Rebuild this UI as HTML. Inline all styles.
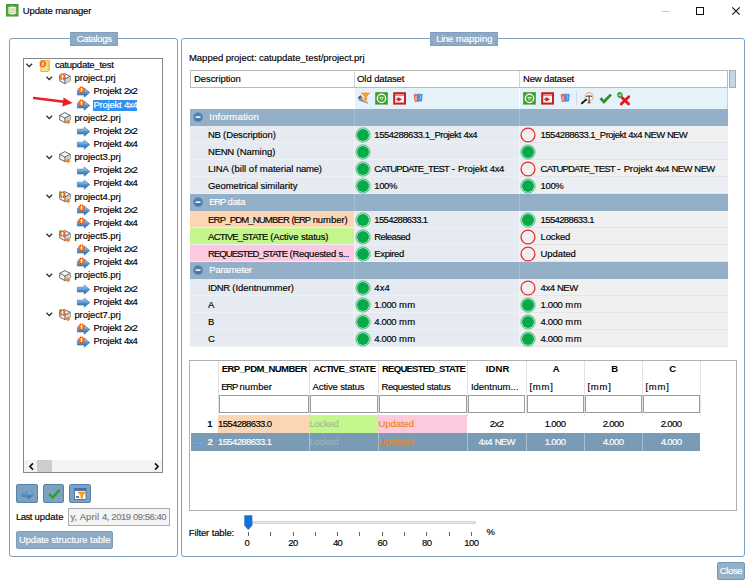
<!DOCTYPE html>
<html lang="en"><head><meta charset="utf-8"><title>Update manager</title>
<style>
html,body{margin:0;padding:0;}
body{width:750px;height:585px;background:#fff;overflow:hidden;position:relative;font-family:"Liberation Sans", sans-serif;font-size:9px;color:#000;}
div,span.t,svg{position:absolute;box-sizing:border-box;}
span.t{white-space:nowrap;-webkit-text-stroke:0.15px;}
svg{overflow:visible;}
</style></head>
<body>
<svg style="left:6px;top:4.4px" width="12.5" height="12.5" viewBox="0 0 12.5 12.5">
<rect x="0" y="0" width="12.5" height="12.5" fill="#3f902b"/>
<rect x="0.8" y="0.8" width="10.9" height="10.9" fill="#57a53f"/>
<path d="M2.4 3.2 Q6.2 1.6 10.1 3.2 V9.6 Q6.2 11.4 2.4 9.6 Z" fill="#f1f8ee"/>
<path d="M2.4 4.6 Q6.2 6 10.1 4.6 M2.4 6.4 Q6.2 7.8 10.1 6.4 M2.4 8.1 Q6.2 9.5 10.1 8.1" stroke="#a9d29c" stroke-width="0.8" fill="none"/>
<path d="M4.6 4.4 H7.8 M4.6 6.2 H7.8 M4.6 8 H7.8" stroke="#e8c890" stroke-width="0.5" fill="none"/>
</svg>
<span class="t" style="top:5.40px;line-height:12px;font-size:9.5px;word-spacing:-0.116px;left:22.80px;"><span style="letter-spacing:-0.139px">Update</span> <span style="letter-spacing:-0.218px">manager</span></span>
<div style="left:662px;top:11px;width:8px;height:1px;background:#c8c8c8;"></div>
<div style="left:696px;top:7px;width:8px;height:8px;border:1px solid #111;"></div>
<svg style="left:732px;top:7px" width="8" height="8" viewBox="0 0 8 8"><path d="M0.3 0.3 L7.7 7.7 M7.7 0.3 L0.3 7.7" stroke="#111" stroke-width="1.15" fill="none"/></svg>
<div style="left:9px;top:38px;width:169px;height:519px;border:1px solid #7ba0c2;border-radius:3px;"></div>
<div style="left:181px;top:38px;width:564px;height:519px;border:1px solid #7ba0c2;border-radius:3px;"></div>
<div style="left:70.3px;top:32px;width:47.6px;height:13.5px;background:#8eabc5;border:1px solid #7f9fbc;"></div>
<span class="t" style="top:32.80px;line-height:12px;font-size:9.5px;color:#fff;left:94.2px;transform:translateX(-50%);letter-spacing:-0.338px;">Catalogs</span>
<div style="left:430.3px;top:32px;width:68.2px;height:13.5px;background:#8eabc5;border:1px solid #7f9fbc;"></div>
<span class="t" style="top:32.80px;line-height:12px;font-size:9.5px;color:#fff;word-spacing:-0.068px;left:464.4px;transform:translateX(-50%);"><span style="letter-spacing:-0.263px">Line</span> <span style="letter-spacing:0.080px">mapping</span></span>
<div style="left:23px;top:58px;width:140px;height:415px;background:#fff;border:1px solid #828790;"></div>
<svg width="0" height="0" style="left:0;top:0"><defs><linearGradient id="ag" x1="0" y1="0" x2="0" y2="1"><stop offset="0.08" stop-color="#b6d9f5"/><stop offset="0.5" stop-color="#5597d3"/><stop offset="0.95" stop-color="#27609e"/></linearGradient></defs></svg>
<svg style="left:26px;top:62.599999999999994px" width="7" height="5" viewBox="0 0 7 5"><path d="M0.5 0.8 L3.3 3.7 L6.1 0.8" stroke="#262626" stroke-width="1.25" fill="none"/></svg>
<svg style="left:38.8px;top:59.599999999999994px" width="12" height="12" viewBox="0 0 12 12"><path d="M1.8 0.5 H10.3 V10.2 H9.2 V11.5 H1.8 Z" fill="#fde68e" stroke="#f2b134" stroke-width="1"/><path d="M9.2 2 V10.2" stroke="#f2b134" stroke-width="0.8"/><g transform="translate(3.9 4.1)"><polygon points="3.33,1.38 1.73,1.73 1.38,3.33 0.00,2.45 -1.38,3.33 -1.73,1.73 -3.33,1.38 -2.45,0.00 -3.33,-1.38 -1.73,-1.73 -1.38,-3.33 -0.00,-2.45 1.38,-3.33 1.73,-1.73 3.33,-1.38 2.45,-0.00" fill="#f1601a" stroke="#e2500f" stroke-width="0.4"/><circle r="1.87" fill="#fb9a3c"/><rect x="-0.55" y="-1.7" width="1.1" height="2.2" fill="#fff"/><rect x="-0.55" y="0.9" width="1.1" height="0.9" fill="#fff"/></g></svg>
<span class="t" style="top:59.10px;line-height:12px;font-size:9.5px;left:54.90px;letter-spacing:-0.252px;">catupdate_test</span>
<svg style="left:45.8px;top:75.74px" width="7" height="5" viewBox="0 0 7 5"><path d="M0.5 0.8 L3.3 3.7 L6.1 0.8" stroke="#262626" stroke-width="1.25" fill="none"/></svg>
<svg style="left:57.6px;top:71.53999999999999px" width="14" height="14" viewBox="0 0 14 14"><path d="M6.9 1.6 L12.2 4.3 L12.2 8.9 L6.9 11.6 L1.7 8.9 L1.7 4.3 Z" fill="#f7f7f7" stroke="#585858" stroke-width="0.9" stroke-linejoin="round"/><path d="M6.9 7 L12.2 4.3 V8.9 L6.9 11.6 Z" fill="#d4d4d4"/><path d="M1.7 4.3 L6.9 7 L12.2 4.3 M6.9 7 V11.6" stroke="#585858" stroke-width="0.9" fill="none"/><g transform="translate(4.4 4.6)"><polygon points="3.33,1.38 1.73,1.73 1.38,3.33 0.00,2.45 -1.38,3.33 -1.73,1.73 -3.33,1.38 -2.45,0.00 -3.33,-1.38 -1.73,-1.73 -1.38,-3.33 -0.00,-2.45 1.38,-3.33 1.73,-1.73 3.33,-1.38 2.45,-0.00" fill="#f1601a" stroke="#e2500f" stroke-width="0.4"/><circle r="1.87" fill="#fb9a3c"/><rect x="-0.55" y="-1.7" width="1.1" height="2.2" fill="#fff"/><rect x="-0.55" y="0.9" width="1.1" height="0.9" fill="#fff"/></g></svg>
<span class="t" style="top:72.24px;line-height:12px;font-size:9.5px;left:74.40px;letter-spacing:-0.038px;">project.prj</span>
<svg style="left:77px;top:86.89px" width="13" height="11" viewBox="0 0 13 11"><path d="M0.4 3.2 H7.2 V1 L12.8 5.6 L7.2 10.2 V8 H0.4 Z" fill="url(#ag)" stroke="#3a72ab" stroke-width="0.6" stroke-linejoin="round"/><g transform="translate(4.5 2.9)"><polygon points="3.33,1.38 1.73,1.73 1.38,3.33 0.00,2.45 -1.38,3.33 -1.73,1.73 -3.33,1.38 -2.45,0.00 -3.33,-1.38 -1.73,-1.73 -1.38,-3.33 -0.00,-2.45 1.38,-3.33 1.73,-1.73 3.33,-1.38 2.45,-0.00" fill="#f1601a" stroke="#e2500f" stroke-width="0.4"/><circle r="1.87" fill="#fb9a3c"/><rect x="-0.55" y="-1.7" width="1.1" height="2.2" fill="#fff"/><rect x="-0.55" y="0.9" width="1.1" height="0.9" fill="#fff"/></g></svg>
<span class="t" style="top:85.39px;line-height:12px;font-size:9.5px;word-spacing:-0.165px;left:93.50px;"><span style="letter-spacing:-0.228px">Projekt</span> <span style="letter-spacing:-0.695px">2x2</span></span>
<svg style="left:77px;top:100.03px" width="13" height="11" viewBox="0 0 13 11"><path d="M0.4 3.2 H7.2 V1 L12.8 5.6 L7.2 10.2 V8 H0.4 Z" fill="url(#ag)" stroke="#3a72ab" stroke-width="0.6" stroke-linejoin="round"/><g transform="translate(4.5 2.9)"><polygon points="3.33,1.38 1.73,1.73 1.38,3.33 0.00,2.45 -1.38,3.33 -1.73,1.73 -3.33,1.38 -2.45,0.00 -3.33,-1.38 -1.73,-1.73 -1.38,-3.33 -0.00,-2.45 1.38,-3.33 1.73,-1.73 3.33,-1.38 2.45,-0.00" fill="#f1601a" stroke="#e2500f" stroke-width="0.4"/><circle r="1.87" fill="#fb9a3c"/><rect x="-0.55" y="-1.7" width="1.1" height="2.2" fill="#fff"/><rect x="-0.55" y="0.9" width="1.1" height="0.9" fill="#fff"/></g></svg>
<div style="left:93.4px;top:99.53px;width:43.8px;height:11px;background:#3092f0;"></div>
<span class="t" style="top:98.53px;line-height:12px;font-size:9.5px;color:#fff;word-spacing:-0.165px;left:93.50px;"><span style="letter-spacing:-0.228px">Projekt</span> <span style="letter-spacing:-0.695px">4x4</span></span>
<svg style="left:45.8px;top:115.18px" width="7" height="5" viewBox="0 0 7 5"><path d="M0.5 0.8 L3.3 3.7 L6.1 0.8" stroke="#262626" stroke-width="1.25" fill="none"/></svg>
<svg style="left:57.6px;top:110.98px" width="14" height="14" viewBox="0 0 14 14"><path d="M6.9 1.6 L12.2 4.3 L12.2 8.9 L6.9 11.6 L1.7 8.9 L1.7 4.3 Z" fill="#f7f7f7" stroke="#585858" stroke-width="0.9" stroke-linejoin="round"/><path d="M6.9 7 L12.2 4.3 V8.9 L6.9 11.6 Z" fill="#d4d4d4"/><path d="M1.7 4.3 L6.9 7 L12.2 4.3 M6.9 7 V11.6" stroke="#585858" stroke-width="0.9" fill="none"/><path d="M7.6 10.3 H9.8 V8.8 L12.2 11 L9.8 13.2 V11.8 H7.6 Z" fill="#f58a1f" stroke="#e8700f" stroke-width="0.5"/></svg>
<span class="t" style="top:111.68px;line-height:12px;font-size:9.5px;left:74.40px;letter-spacing:-0.058px;">project2.prj</span>
<svg style="left:77px;top:126.32px" width="13" height="11" viewBox="0 0 13 11"><path d="M0.4 3.2 H7.2 V1 L12.8 5.6 L7.2 10.2 V8 H0.4 Z" fill="url(#ag)" stroke="#3a72ab" stroke-width="0.6" stroke-linejoin="round"/></svg>
<span class="t" style="top:124.82px;line-height:12px;font-size:9.5px;word-spacing:-0.165px;left:93.50px;"><span style="letter-spacing:-0.228px">Projekt</span> <span style="letter-spacing:-0.695px">2x2</span></span>
<svg style="left:77px;top:139.47px" width="13" height="11" viewBox="0 0 13 11"><path d="M0.4 3.2 H7.2 V1 L12.8 5.6 L7.2 10.2 V8 H0.4 Z" fill="url(#ag)" stroke="#3a72ab" stroke-width="0.6" stroke-linejoin="round"/></svg>
<span class="t" style="top:137.97px;line-height:12px;font-size:9.5px;word-spacing:-0.165px;left:93.50px;"><span style="letter-spacing:-0.228px">Projekt</span> <span style="letter-spacing:-0.695px">4x4</span></span>
<svg style="left:45.8px;top:154.62px" width="7" height="5" viewBox="0 0 7 5"><path d="M0.5 0.8 L3.3 3.7 L6.1 0.8" stroke="#262626" stroke-width="1.25" fill="none"/></svg>
<svg style="left:57.6px;top:150.42000000000002px" width="14" height="14" viewBox="0 0 14 14"><path d="M6.9 1.6 L12.2 4.3 L12.2 8.9 L6.9 11.6 L1.7 8.9 L1.7 4.3 Z" fill="#f7f7f7" stroke="#585858" stroke-width="0.9" stroke-linejoin="round"/><path d="M6.9 7 L12.2 4.3 V8.9 L6.9 11.6 Z" fill="#d4d4d4"/><path d="M1.7 4.3 L6.9 7 L12.2 4.3 M6.9 7 V11.6" stroke="#585858" stroke-width="0.9" fill="none"/><path d="M7.6 10.3 H9.8 V8.8 L12.2 11 L9.8 13.2 V11.8 H7.6 Z" fill="#f58a1f" stroke="#e8700f" stroke-width="0.5"/></svg>
<span class="t" style="top:151.12px;line-height:12px;font-size:9.5px;left:74.40px;letter-spacing:-0.058px;">project3.prj</span>
<svg style="left:77px;top:165.76px" width="13" height="11" viewBox="0 0 13 11"><path d="M0.4 3.2 H7.2 V1 L12.8 5.6 L7.2 10.2 V8 H0.4 Z" fill="url(#ag)" stroke="#3a72ab" stroke-width="0.6" stroke-linejoin="round"/></svg>
<span class="t" style="top:164.26px;line-height:12px;font-size:9.5px;word-spacing:-0.165px;left:93.50px;"><span style="letter-spacing:-0.228px">Projekt</span> <span style="letter-spacing:-0.695px">2x2</span></span>
<svg style="left:77px;top:178.9px" width="13" height="11" viewBox="0 0 13 11"><path d="M0.4 3.2 H7.2 V1 L12.8 5.6 L7.2 10.2 V8 H0.4 Z" fill="url(#ag)" stroke="#3a72ab" stroke-width="0.6" stroke-linejoin="round"/></svg>
<span class="t" style="top:177.40px;line-height:12px;font-size:9.5px;word-spacing:-0.165px;left:93.50px;"><span style="letter-spacing:-0.228px">Projekt</span> <span style="letter-spacing:-0.695px">4x4</span></span>
<svg style="left:45.8px;top:194.05px" width="7" height="5" viewBox="0 0 7 5"><path d="M0.5 0.8 L3.3 3.7 L6.1 0.8" stroke="#262626" stroke-width="1.25" fill="none"/></svg>
<svg style="left:57.6px;top:189.85000000000002px" width="14" height="14" viewBox="0 0 14 14"><path d="M6.9 1.6 L12.2 4.3 L12.2 8.9 L6.9 11.6 L1.7 8.9 L1.7 4.3 Z" fill="#f7f7f7" stroke="#585858" stroke-width="0.9" stroke-linejoin="round"/><path d="M6.9 7 L12.2 4.3 V8.9 L6.9 11.6 Z" fill="#d4d4d4"/><path d="M1.7 4.3 L6.9 7 L12.2 4.3 M6.9 7 V11.6" stroke="#585858" stroke-width="0.9" fill="none"/><path d="M7.6 10.3 H9.8 V8.8 L12.2 11 L9.8 13.2 V11.8 H7.6 Z" fill="#f58a1f" stroke="#e8700f" stroke-width="0.5"/><g transform="translate(4.4 4.6)"><polygon points="3.33,1.38 1.73,1.73 1.38,3.33 0.00,2.45 -1.38,3.33 -1.73,1.73 -3.33,1.38 -2.45,0.00 -3.33,-1.38 -1.73,-1.73 -1.38,-3.33 -0.00,-2.45 1.38,-3.33 1.73,-1.73 3.33,-1.38 2.45,-0.00" fill="#f1601a" stroke="#e2500f" stroke-width="0.4"/><circle r="1.87" fill="#fb9a3c"/><rect x="-0.55" y="-1.7" width="1.1" height="2.2" fill="#fff"/><rect x="-0.55" y="0.9" width="1.1" height="0.9" fill="#fff"/></g><circle cx="2.2" cy="2.3" r="1.1" fill="#4fae3c"/></svg>
<span class="t" style="top:190.55px;line-height:12px;font-size:9.5px;left:74.40px;letter-spacing:-0.058px;">project4.prj</span>
<svg style="left:77px;top:205.19px" width="13" height="11" viewBox="0 0 13 11"><path d="M0.4 3.2 H7.2 V1 L12.8 5.6 L7.2 10.2 V8 H0.4 Z" fill="url(#ag)" stroke="#3a72ab" stroke-width="0.6" stroke-linejoin="round"/><g transform="translate(4.5 2.9)"><polygon points="3.33,1.38 1.73,1.73 1.38,3.33 0.00,2.45 -1.38,3.33 -1.73,1.73 -3.33,1.38 -2.45,0.00 -3.33,-1.38 -1.73,-1.73 -1.38,-3.33 -0.00,-2.45 1.38,-3.33 1.73,-1.73 3.33,-1.38 2.45,-0.00" fill="#f1601a" stroke="#e2500f" stroke-width="0.4"/><circle r="1.87" fill="#fb9a3c"/><rect x="-0.55" y="-1.7" width="1.1" height="2.2" fill="#fff"/><rect x="-0.55" y="0.9" width="1.1" height="0.9" fill="#fff"/></g></svg>
<span class="t" style="top:203.69px;line-height:12px;font-size:9.5px;word-spacing:-0.165px;left:93.50px;"><span style="letter-spacing:-0.228px">Projekt</span> <span style="letter-spacing:-0.695px">2x2</span></span>
<svg style="left:77px;top:218.34px" width="13" height="11" viewBox="0 0 13 11"><path d="M0.4 3.2 H7.2 V1 L12.8 5.6 L7.2 10.2 V8 H0.4 Z" fill="url(#ag)" stroke="#3a72ab" stroke-width="0.6" stroke-linejoin="round"/><g transform="translate(4.5 2.9)"><polygon points="3.33,1.38 1.73,1.73 1.38,3.33 0.00,2.45 -1.38,3.33 -1.73,1.73 -3.33,1.38 -2.45,0.00 -3.33,-1.38 -1.73,-1.73 -1.38,-3.33 -0.00,-2.45 1.38,-3.33 1.73,-1.73 3.33,-1.38 2.45,-0.00" fill="#f1601a" stroke="#e2500f" stroke-width="0.4"/><circle r="1.87" fill="#fb9a3c"/><rect x="-0.55" y="-1.7" width="1.1" height="2.2" fill="#fff"/><rect x="-0.55" y="0.9" width="1.1" height="0.9" fill="#fff"/></g></svg>
<span class="t" style="top:216.84px;line-height:12px;font-size:9.5px;word-spacing:-0.165px;left:93.50px;"><span style="letter-spacing:-0.228px">Projekt</span> <span style="letter-spacing:-0.695px">4x4</span></span>
<svg style="left:45.8px;top:233.48px" width="7" height="5" viewBox="0 0 7 5"><path d="M0.5 0.8 L3.3 3.7 L6.1 0.8" stroke="#262626" stroke-width="1.25" fill="none"/></svg>
<svg style="left:57.6px;top:229.28px" width="14" height="14" viewBox="0 0 14 14"><path d="M6.9 1.6 L12.2 4.3 L12.2 8.9 L6.9 11.6 L1.7 8.9 L1.7 4.3 Z" fill="#f7f7f7" stroke="#585858" stroke-width="0.9" stroke-linejoin="round"/><path d="M6.9 7 L12.2 4.3 V8.9 L6.9 11.6 Z" fill="#d4d4d4"/><path d="M1.7 4.3 L6.9 7 L12.2 4.3 M6.9 7 V11.6" stroke="#585858" stroke-width="0.9" fill="none"/><path d="M7.6 10.3 H9.8 V8.8 L12.2 11 L9.8 13.2 V11.8 H7.6 Z" fill="#f58a1f" stroke="#e8700f" stroke-width="0.5"/><g transform="translate(4.4 4.6)"><polygon points="3.33,1.38 1.73,1.73 1.38,3.33 0.00,2.45 -1.38,3.33 -1.73,1.73 -3.33,1.38 -2.45,0.00 -3.33,-1.38 -1.73,-1.73 -1.38,-3.33 -0.00,-2.45 1.38,-3.33 1.73,-1.73 3.33,-1.38 2.45,-0.00" fill="#f1601a" stroke="#e2500f" stroke-width="0.4"/><circle r="1.87" fill="#fb9a3c"/><rect x="-0.55" y="-1.7" width="1.1" height="2.2" fill="#fff"/><rect x="-0.55" y="0.9" width="1.1" height="0.9" fill="#fff"/></g><circle cx="2.2" cy="2.3" r="1.1" fill="#4fae3c"/></svg>
<span class="t" style="top:229.98px;line-height:12px;font-size:9.5px;left:74.40px;letter-spacing:-0.058px;">project5.prj</span>
<svg style="left:77px;top:244.63px" width="13" height="11" viewBox="0 0 13 11"><path d="M0.4 3.2 H7.2 V1 L12.8 5.6 L7.2 10.2 V8 H0.4 Z" fill="url(#ag)" stroke="#3a72ab" stroke-width="0.6" stroke-linejoin="round"/><g transform="translate(4.5 2.9)"><polygon points="3.33,1.38 1.73,1.73 1.38,3.33 0.00,2.45 -1.38,3.33 -1.73,1.73 -3.33,1.38 -2.45,0.00 -3.33,-1.38 -1.73,-1.73 -1.38,-3.33 -0.00,-2.45 1.38,-3.33 1.73,-1.73 3.33,-1.38 2.45,-0.00" fill="#f1601a" stroke="#e2500f" stroke-width="0.4"/><circle r="1.87" fill="#fb9a3c"/><rect x="-0.55" y="-1.7" width="1.1" height="2.2" fill="#fff"/><rect x="-0.55" y="0.9" width="1.1" height="0.9" fill="#fff"/></g></svg>
<span class="t" style="top:243.13px;line-height:12px;font-size:9.5px;word-spacing:-0.165px;left:93.50px;"><span style="letter-spacing:-0.228px">Projekt</span> <span style="letter-spacing:-0.695px">2x2</span></span>
<svg style="left:77px;top:257.77px" width="13" height="11" viewBox="0 0 13 11"><path d="M0.4 3.2 H7.2 V1 L12.8 5.6 L7.2 10.2 V8 H0.4 Z" fill="url(#ag)" stroke="#3a72ab" stroke-width="0.6" stroke-linejoin="round"/><g transform="translate(4.5 2.9)"><polygon points="3.33,1.38 1.73,1.73 1.38,3.33 0.00,2.45 -1.38,3.33 -1.73,1.73 -3.33,1.38 -2.45,0.00 -3.33,-1.38 -1.73,-1.73 -1.38,-3.33 -0.00,-2.45 1.38,-3.33 1.73,-1.73 3.33,-1.38 2.45,-0.00" fill="#f1601a" stroke="#e2500f" stroke-width="0.4"/><circle r="1.87" fill="#fb9a3c"/><rect x="-0.55" y="-1.7" width="1.1" height="2.2" fill="#fff"/><rect x="-0.55" y="0.9" width="1.1" height="0.9" fill="#fff"/></g></svg>
<span class="t" style="top:256.27px;line-height:12px;font-size:9.5px;word-spacing:-0.165px;left:93.50px;"><span style="letter-spacing:-0.228px">Projekt</span> <span style="letter-spacing:-0.695px">4x4</span></span>
<svg style="left:45.8px;top:272.92px" width="7" height="5" viewBox="0 0 7 5"><path d="M0.5 0.8 L3.3 3.7 L6.1 0.8" stroke="#262626" stroke-width="1.25" fill="none"/></svg>
<svg style="left:57.6px;top:268.72px" width="14" height="14" viewBox="0 0 14 14"><path d="M6.9 1.6 L12.2 4.3 L12.2 8.9 L6.9 11.6 L1.7 8.9 L1.7 4.3 Z" fill="#f7f7f7" stroke="#585858" stroke-width="0.9" stroke-linejoin="round"/><path d="M6.9 7 L12.2 4.3 V8.9 L6.9 11.6 Z" fill="#d4d4d4"/><path d="M1.7 4.3 L6.9 7 L12.2 4.3 M6.9 7 V11.6" stroke="#585858" stroke-width="0.9" fill="none"/><path d="M7.6 10.3 H9.8 V8.8 L12.2 11 L9.8 13.2 V11.8 H7.6 Z" fill="#f58a1f" stroke="#e8700f" stroke-width="0.5"/></svg>
<span class="t" style="top:269.42px;line-height:12px;font-size:9.5px;left:74.40px;letter-spacing:-0.058px;">project6.prj</span>
<svg style="left:77px;top:284.06px" width="13" height="11" viewBox="0 0 13 11"><path d="M0.4 3.2 H7.2 V1 L12.8 5.6 L7.2 10.2 V8 H0.4 Z" fill="url(#ag)" stroke="#3a72ab" stroke-width="0.6" stroke-linejoin="round"/></svg>
<span class="t" style="top:282.56px;line-height:12px;font-size:9.5px;word-spacing:-0.165px;left:93.50px;"><span style="letter-spacing:-0.228px">Projekt</span> <span style="letter-spacing:-0.695px">2x2</span></span>
<svg style="left:77px;top:297.21px" width="13" height="11" viewBox="0 0 13 11"><path d="M0.4 3.2 H7.2 V1 L12.8 5.6 L7.2 10.2 V8 H0.4 Z" fill="url(#ag)" stroke="#3a72ab" stroke-width="0.6" stroke-linejoin="round"/></svg>
<span class="t" style="top:295.71px;line-height:12px;font-size:9.5px;word-spacing:-0.165px;left:93.50px;"><span style="letter-spacing:-0.228px">Projekt</span> <span style="letter-spacing:-0.695px">4x4</span></span>
<svg style="left:45.8px;top:312.36px" width="7" height="5" viewBox="0 0 7 5"><path d="M0.5 0.8 L3.3 3.7 L6.1 0.8" stroke="#262626" stroke-width="1.25" fill="none"/></svg>
<svg style="left:57.6px;top:308.16px" width="14" height="14" viewBox="0 0 14 14"><path d="M6.9 1.6 L12.2 4.3 L12.2 8.9 L6.9 11.6 L1.7 8.9 L1.7 4.3 Z" fill="#f7f7f7" stroke="#585858" stroke-width="0.9" stroke-linejoin="round"/><path d="M6.9 7 L12.2 4.3 V8.9 L6.9 11.6 Z" fill="#d4d4d4"/><path d="M1.7 4.3 L6.9 7 L12.2 4.3 M6.9 7 V11.6" stroke="#585858" stroke-width="0.9" fill="none"/><path d="M7.6 10.3 H9.8 V8.8 L12.2 11 L9.8 13.2 V11.8 H7.6 Z" fill="#f58a1f" stroke="#e8700f" stroke-width="0.5"/><g transform="translate(4.4 4.6)"><polygon points="3.33,1.38 1.73,1.73 1.38,3.33 0.00,2.45 -1.38,3.33 -1.73,1.73 -3.33,1.38 -2.45,0.00 -3.33,-1.38 -1.73,-1.73 -1.38,-3.33 -0.00,-2.45 1.38,-3.33 1.73,-1.73 3.33,-1.38 2.45,-0.00" fill="#f1601a" stroke="#e2500f" stroke-width="0.4"/><circle r="1.87" fill="#fb9a3c"/><rect x="-0.55" y="-1.7" width="1.1" height="2.2" fill="#fff"/><rect x="-0.55" y="0.9" width="1.1" height="0.9" fill="#fff"/></g><circle cx="2.2" cy="2.3" r="1.1" fill="#4fae3c"/></svg>
<span class="t" style="top:308.86px;line-height:12px;font-size:9.5px;left:74.40px;letter-spacing:-0.058px;">project7.prj</span>
<svg style="left:77px;top:323.5px" width="13" height="11" viewBox="0 0 13 11"><path d="M0.4 3.2 H7.2 V1 L12.8 5.6 L7.2 10.2 V8 H0.4 Z" fill="url(#ag)" stroke="#3a72ab" stroke-width="0.6" stroke-linejoin="round"/><g transform="translate(4.5 2.9)"><polygon points="3.33,1.38 1.73,1.73 1.38,3.33 0.00,2.45 -1.38,3.33 -1.73,1.73 -3.33,1.38 -2.45,0.00 -3.33,-1.38 -1.73,-1.73 -1.38,-3.33 -0.00,-2.45 1.38,-3.33 1.73,-1.73 3.33,-1.38 2.45,-0.00" fill="#f1601a" stroke="#e2500f" stroke-width="0.4"/><circle r="1.87" fill="#fb9a3c"/><rect x="-0.55" y="-1.7" width="1.1" height="2.2" fill="#fff"/><rect x="-0.55" y="0.9" width="1.1" height="0.9" fill="#fff"/></g></svg>
<span class="t" style="top:322.00px;line-height:12px;font-size:9.5px;word-spacing:-0.165px;left:93.50px;"><span style="letter-spacing:-0.228px">Projekt</span> <span style="letter-spacing:-0.695px">2x2</span></span>
<svg style="left:77px;top:336.64px" width="13" height="11" viewBox="0 0 13 11"><path d="M0.4 3.2 H7.2 V1 L12.8 5.6 L7.2 10.2 V8 H0.4 Z" fill="url(#ag)" stroke="#3a72ab" stroke-width="0.6" stroke-linejoin="round"/><g transform="translate(4.5 2.9)"><polygon points="3.33,1.38 1.73,1.73 1.38,3.33 0.00,2.45 -1.38,3.33 -1.73,1.73 -3.33,1.38 -2.45,0.00 -3.33,-1.38 -1.73,-1.73 -1.38,-3.33 -0.00,-2.45 1.38,-3.33 1.73,-1.73 3.33,-1.38 2.45,-0.00" fill="#f1601a" stroke="#e2500f" stroke-width="0.4"/><circle r="1.87" fill="#fb9a3c"/><rect x="-0.55" y="-1.7" width="1.1" height="2.2" fill="#fff"/><rect x="-0.55" y="0.9" width="1.1" height="0.9" fill="#fff"/></g></svg>
<span class="t" style="top:335.14px;line-height:12px;font-size:9.5px;word-spacing:-0.165px;left:93.50px;"><span style="letter-spacing:-0.228px">Projekt</span> <span style="letter-spacing:-0.695px">4x4</span></span>
<svg style="left:30px;top:94px" width="46" height="14" viewBox="0 0 46 14"><path d="M4 4 L36 8" stroke="#ee1c24" stroke-width="2.3" stroke-linecap="round" fill="none"/><path d="M42.6 8.9 L32.3 12.4 L33.6 3.6 Z" fill="#ee1c24"/></svg>
<div style="left:24px;top:460px;width:138px;height:12px;background:#f3f3f3;"></div>
<div style="left:37px;top:460px;width:15px;height:12px;background:#cdcdcd;"></div>
<svg style="left:28.6px;top:462.6px" width="5" height="7" viewBox="0 0 5 7"><path d="M4 0.4 L0.9 3.5 L4 6.6" stroke="#111" stroke-width="1.6" fill="none"/></svg>
<svg style="left:153.6px;top:462.6px" width="5" height="7" viewBox="0 0 5 7"><path d="M1 0.4 L4.1 3.5 L1 6.6" stroke="#111" stroke-width="1.6" fill="none"/></svg>
<div style="left:16px;top:484.2px;width:21.8px;height:18.4px;background:#7ba0c0;border:1px solid #5983a9;border-radius:2px;"></div>
<div style="left:42.6px;top:484.2px;width:21.8px;height:18.4px;background:#7ba0c0;border:1px solid #5983a9;border-radius:2px;"></div>
<div style="left:69px;top:484.2px;width:21.8px;height:18.4px;background:#7ba0c0;border:1px solid #5983a9;border-radius:2px;"></div>
<svg style="left:20.5px;top:488.5px" width="13" height="11" viewBox="0 0 13 11"><path d="M0.8 3.9 H7.2 V1.3 L12.6 5.6 L7.2 9.9 V7.4 H0.8 Z" fill="url(#ag)" stroke="#3f78ad" stroke-width="0.5"/></svg>
<svg style="left:47.5px;top:488px" width="13" height="11" viewBox="0 0 13 11"><path d="M1.2 6 L4.6 9.6 L11.6 1.8" stroke="#2e9e2a" stroke-width="2.4" fill="none" stroke-linejoin="round"/></svg>
<svg style="left:74px;top:487.5px" width="13" height="13" viewBox="0 0 13 13"><rect x="0.5" y="0.5" width="11.5" height="11" fill="#fff" stroke="#4a78b0"/><rect x="0.5" y="0.5" width="11.5" height="2.4" fill="#3f6fb0"/><path d="M4 4 H11.5 L8.6 7.5 V10.8 L6.8 9.6 V7.5 Z" fill="#f7a01f" stroke="#d9780a" stroke-width="0.5"/><rect x="2" y="8" width="3" height="2" fill="#777"/></svg>
<span class="t" style="top:510.70px;line-height:12px;font-size:9.5px;word-spacing:-0.104px;left:15.90px;"><span style="letter-spacing:-0.457px">Last</span> <span style="letter-spacing:-0.040px">update</span></span>
<div style="left:68px;top:507.5px;width:102px;height:18.3px;background:#f4f4f4;border:1px solid #adadad;"></div>
<span class="t" style="top:510.70px;line-height:12px;font-size:9.5px;color:#7a7a7a;word-spacing:-0.036px;left:70.40px;"><span style="letter-spacing:-0.015px">y,</span> <span style="letter-spacing:0.125px">April</span> <span style="letter-spacing:-0.547px">4,</span> <span style="letter-spacing:-0.503px">2019</span> <span style="letter-spacing:-0.521px">09:56:40</span></span>
<div style="left:16px;top:531.2px;width:96.8px;height:17.6px;background:#8eabc5;border:1px solid #7c9ebc;border-radius:2px;"></div>
<span class="t" style="top:534.00px;line-height:12px;font-size:9.5px;color:#fff;word-spacing:-0.108px;left:18.90px;"><span style="letter-spacing:-0.124px">Update</span> <span style="letter-spacing:-0.087px">structure</span> <span style="letter-spacing:-0.052px">table</span></span>
<span class="t" style="top:51.80px;line-height:12px;font-size:9.5px;word-spacing:-0.093px;left:188.90px;"><span style="letter-spacing:0.002px">Mapped</span> <span style="letter-spacing:-0.052px">project:</span> <span style="letter-spacing:-0.049px">catupdate_test/project.prj</span></span>
<div style="left:190px;top:70px;width:538px;height:18px;background:#fff;border:1px solid #bababa;"></div>
<div style="left:354px;top:71px;width:1px;height:16px;background:#d5d5d5;"></div>
<div style="left:519px;top:71px;width:1px;height:16px;background:#d5d5d5;"></div>
<span class="t" style="top:72.90px;line-height:12px;font-size:9.5px;left:194.00px;letter-spacing:-0.076px;">Description</span>
<span class="t" style="top:72.90px;line-height:12px;font-size:9.5px;word-spacing:-0.100px;left:357.00px;"><span style="letter-spacing:-0.035px">Old</span> <span style="letter-spacing:-0.172px">dataset</span></span>
<span class="t" style="top:72.90px;line-height:12px;font-size:9.5px;word-spacing:-0.100px;left:523.00px;"><span style="letter-spacing:-0.175px">New</span> <span style="letter-spacing:-0.172px">dataset</span></span>
<div style="left:729px;top:70px;width:7px;height:18px;background:#c6d6e5;border:1px solid #a2aebb;"></div>
<div style="left:354.5px;top:88px;width:373.5px;height:20.5px;background:#e6f2fa;"></div>
<div style="left:727px;top:88px;width:1px;height:20.5px;background:#cfcfcf;"></div>
<div style="left:519px;top:88px;width:1px;height:20.5px;background:#fff;"></div>
<svg style="left:357.2px;top:92px" width="13" height="13" viewBox="0 0 13 13"><path d="M4.2 0.9 H12.6 L9.6 4.6 V8.6 L7.6 7.6 V4.6 Z" fill="#f9a11b" stroke="#f07f13" stroke-width="0.5"/><path d="M0.9 5.6 L3.4 3.2 L5.2 4.8 L6.4 7.2 L11.2 10.4 L10.4 11.8 L5 9.4 L2.6 9 Z" fill="#8e9399"/><path d="M0.9 5.6 L3.4 3.2 L4.6 4.4 L2.2 7.4 Z" fill="#5c6066"/><path d="M5 7 L10.4 10.6" stroke="#d6dade" stroke-width="0.8"/></svg>
<svg style="left:374.8px;top:91.9px" width="13" height="13" viewBox="0 0 13 13"><rect x="0.2" y="0.2" width="12.6" height="12.4" fill="#3f9a2c"/><circle cx="6.5" cy="6.4" r="4.2" fill="#4aa83a" stroke="#fff" stroke-width="1.3"/><path d="M4.3 5 H8.7 L6.5 8.6 Z" fill="#e9f6e4"/><path d="M5.6 5.7 H7.4 L6.5 7.2 Z" fill="#3f9a2c"/></svg>
<svg style="left:393px;top:91.9px" width="13" height="13" viewBox="0 0 13 13"><rect x="0.2" y="0.2" width="12.8" height="12.4" fill="#c81d1f"/><rect x="2.2" y="2" width="8.8" height="2" fill="#e58a8c"/><rect x="2.2" y="4" width="8.8" height="6.6" fill="#fbf3f3"/><path d="M4.6 4.9 L9 7.3 L4.6 9.7 Z" fill="#c81d1f"/><rect x="3.2" y="6.7" width="3" height="1.2" fill="#c81d1f"/></svg>
<svg style="left:412.6px;top:93.4px" width="10" height="10" viewBox="0 0 10 10"><path d="M0.6 1.8 L3 0.6 L4.2 1.6 L5.2 0.8 L5.6 8.6 L1.8 9 Z" fill="#ea5a55"/><path d="M4.4 1.4 L6 0.3 L7.2 1.2 L9.6 0.8 L9 8.2 L5 8.8 Z" fill="#3f8fe2"/><path d="M2.4 2.6 V7.6 M3.6 2.8 V7.4" stroke="#fbd0cf" stroke-width="0.6"/><path d="M6.6 2.2 L7.8 4.4 L6.6 6.8" stroke="#cfe4fb" stroke-width="0.7" fill="none"/></svg>
<svg style="left:523px;top:91.9px" width="13" height="13" viewBox="0 0 13 13"><rect x="0.2" y="0.2" width="12.6" height="12.4" fill="#3f9a2c"/><circle cx="6.5" cy="6.4" r="4.2" fill="#4aa83a" stroke="#fff" stroke-width="1.3"/><path d="M4.3 5 H8.7 L6.5 8.6 Z" fill="#e9f6e4"/><path d="M5.6 5.7 H7.4 L6.5 7.2 Z" fill="#3f9a2c"/></svg>
<svg style="left:541px;top:91.9px" width="13" height="13" viewBox="0 0 13 13"><rect x="0.2" y="0.2" width="12.8" height="12.4" fill="#c81d1f"/><rect x="2.2" y="2" width="8.8" height="2" fill="#e58a8c"/><rect x="2.2" y="4" width="8.8" height="6.6" fill="#fbf3f3"/><path d="M4.6 4.9 L9 7.3 L4.6 9.7 Z" fill="#c81d1f"/><rect x="3.2" y="6.7" width="3" height="1.2" fill="#c81d1f"/></svg>
<svg style="left:560.4px;top:93.2px" width="10" height="10" viewBox="0 0 10 10"><path d="M0.6 1.8 L3 0.6 L4.2 1.6 L5.2 0.8 L5.6 8.6 L1.8 9 Z" fill="#ea5a55"/><path d="M4.4 1.4 L6 0.3 L7.2 1.2 L9.6 0.8 L9 8.2 L5 8.8 Z" fill="#3f8fe2"/><path d="M2.4 2.6 V7.6 M3.6 2.8 V7.4" stroke="#fbd0cf" stroke-width="0.6"/><path d="M6.6 2.2 L7.8 4.4 L6.6 6.8" stroke="#cfe4fb" stroke-width="0.7" fill="none"/></svg>
<div style="left:576px;top:91px;width:1px;height:14px;background:#dcd6dc;"></div>
<svg style="left:580.6px;top:92px" width="13" height="13" viewBox="0 0 13 13"><circle cx="8.1" cy="4.9" r="4" fill="#fffaf4" stroke="#f0a672" stroke-width="1.1"/><path d="M5.1 7.6 L0.9 11.3" stroke="#111" stroke-width="1.8" stroke-linecap="round"/><path d="M5.6 4 H10.6 M8.1 4 V10.6 M6.6 10.8 H9.6" stroke="#333" stroke-width="1" fill="none"/><path d="M5.6 5 V4 M10.6 5 V4" stroke="#333" stroke-width="0.8"/></svg>
<svg style="left:599px;top:92.6px" width="13" height="12" viewBox="0 0 13 12"><path d="M0.8 6.2 L2.6 4.6 L4.8 7.2 L11 0.9 L12.6 2.4 L4.9 10.6 Z" fill="#2f8f20" stroke="#1f7416" stroke-width="0.5" stroke-linejoin="round"/></svg>
<svg style="left:616.5px;top:91.9px" width="13" height="13" viewBox="0 0 13 13"><path d="M4.4 5 L11.6 12 M11.8 4.8 L4.2 12" stroke="#e8141c" stroke-width="2.7" fill="none" stroke-linecap="round"/><circle cx="2.9" cy="2.9" r="2.8" fill="#3fa53a"/><path d="M1.5 2.9 L2.6 4 L4.5 1.8" stroke="#fff" stroke-width="0.9" fill="none"/></svg>
<div style="left:190px;top:108.9px;width:538px;height:17.0px;background:#94b0c8;"></div>
<div style="left:354px;top:108.9px;width:1px;height:17.0px;background:#a9c0d4;"></div>
<div style="left:519px;top:108.9px;width:1px;height:17.0px;background:#a9c0d4;"></div>
<svg style="left:193px;top:112.30000000000001px" width="10.2" height="10.2" viewBox="0 0 10.2 10.2"><circle cx="5.1" cy="5.1" r="4.7" fill="#4c82b8" stroke="#6f94b6" stroke-width="0.8"/><path d="M1.2 6.4 A4.2 4.2 0 0 0 9 6.4 Z" fill="#3d72a8" opacity="0.7"/><rect x="2.7" y="4.4" width="4.8" height="1.5" fill="#fff"/></svg>
<span class="t" style="top:111.40px;line-height:12px;font-size:9.5px;color:#fff;left:209.30px;letter-spacing:0.197px;">Information</span>
<div style="left:190px;top:125.9px;width:538px;height:17.0px;background:#e5ebf1;"></div>
<div style="left:519.5px;top:125.9px;width:208.5px;height:17.0px;background:#f0f0f0;"></div>
<div style="left:190px;top:142.4px;width:329.5px;height:1px;background:#edf0f4;"></div>
<div style="left:519.5px;top:142.4px;width:208.5px;height:1px;background:#e3e5e7;"></div>
<div style="left:354px;top:125.9px;width:1px;height:17.0px;background:#f2f5f8;"></div>
<div style="left:519px;top:125.9px;width:1px;height:17.0px;background:#f2f5f8;"></div>
<span class="t" style="top:128.50px;line-height:12px;font-size:9.5px;word-spacing:-0.072px;left:208.10px;"><span style="letter-spacing:-0.406px">NB</span> <span style="letter-spacing:-0.086px">(Description)</span></span>
<svg style="left:354.5px;top:126.5px" width="16" height="16" viewBox="0 0 16 16"><circle cx="8" cy="8" r="7.1" fill="#dff4e7" stroke="#45bd78" stroke-width="1"/><circle cx="8" cy="8" r="6" fill="#08a94b"/></svg>
<span class="t" style="top:128.50px;line-height:12px;font-size:9.5px;word-spacing:-0.081px;left:374.30px;"><span style="letter-spacing:-0.453px">1554288633.1_Projekt</span> <span style="letter-spacing:-0.545px">4x4</span></span>
<svg style="left:519.8px;top:126.5px" width="16" height="16" viewBox="0 0 16 16"><circle cx="8" cy="8" r="6.95" fill="none" stroke="#ea2a31" stroke-width="1.3"/></svg>
<span class="t" style="top:128.50px;line-height:12px;font-size:9.5px;word-spacing:-0.120px;left:540.60px;"><span style="letter-spacing:-0.520px">1554288633.1_Projekt</span> <span style="letter-spacing:-0.616px">4x4</span> <span style="letter-spacing:-0.701px">NEW</span> <span style="letter-spacing:-0.701px">NEW</span></span>
<div style="left:190px;top:142.9px;width:538px;height:17.0px;background:#e5ebf1;"></div>
<div style="left:519.5px;top:142.9px;width:208.5px;height:17.0px;background:#ebeff3;"></div>
<div style="left:190px;top:159.4px;width:329.5px;height:1px;background:#edf0f4;"></div>
<div style="left:519.5px;top:159.4px;width:208.5px;height:1px;background:#e3e5e7;"></div>
<div style="left:354px;top:142.9px;width:1px;height:17.0px;background:#f2f5f8;"></div>
<div style="left:519px;top:142.9px;width:1px;height:17.0px;background:#f2f5f8;"></div>
<span class="t" style="top:145.50px;line-height:12px;font-size:9.5px;word-spacing:-0.063px;left:208.10px;"><span style="letter-spacing:-0.260px">NENN</span> <span style="letter-spacing:-0.041px">(Naming)</span></span>
<svg style="left:354.5px;top:143.5px" width="16" height="16" viewBox="0 0 16 16"><circle cx="8" cy="8" r="7.1" fill="#dff4e7" stroke="#45bd78" stroke-width="1"/><circle cx="8" cy="8" r="6" fill="#08a94b"/></svg>
<svg style="left:519.8px;top:143.5px" width="16" height="16" viewBox="0 0 16 16"><circle cx="8" cy="8" r="7.1" fill="#dff4e7" stroke="#45bd78" stroke-width="1"/><circle cx="8" cy="8" r="6" fill="#08a94b"/></svg>
<div style="left:190px;top:159.9px;width:538px;height:17.0px;background:#e5ebf1;"></div>
<div style="left:519.5px;top:159.9px;width:208.5px;height:17.0px;background:#f0f0f0;"></div>
<div style="left:190px;top:176.4px;width:329.5px;height:1px;background:#edf0f4;"></div>
<div style="left:519.5px;top:176.4px;width:208.5px;height:1px;background:#e3e5e7;"></div>
<div style="left:354px;top:159.9px;width:1px;height:17.0px;background:#f2f5f8;"></div>
<div style="left:519px;top:159.9px;width:1px;height:17.0px;background:#f2f5f8;"></div>
<span class="t" style="top:162.50px;line-height:12px;font-size:9.5px;word-spacing:-0.075px;left:208.10px;"><span style="letter-spacing:-0.164px">LINA</span> <span style="letter-spacing:0.072px">(bill</span> <span style="letter-spacing:0.242px">of</span> <span style="letter-spacing:-0.041px">material</span> <span style="letter-spacing:-0.218px">name)</span></span>
<svg style="left:354.5px;top:160.5px" width="16" height="16" viewBox="0 0 16 16"><circle cx="8" cy="8" r="7.1" fill="#dff4e7" stroke="#45bd78" stroke-width="1"/><circle cx="8" cy="8" r="6" fill="#08a94b"/></svg>
<span class="t" style="top:162.50px;line-height:12px;font-size:9.5px;word-spacing:-0.056px;left:374.30px;"><span style="letter-spacing:-0.777px">CATUPDATE_TEST</span> <span style="letter-spacing:0.602px">-</span> <span style="letter-spacing:-0.053px">Projekt</span> <span style="letter-spacing:-0.502px">4x4</span></span>
<svg style="left:519.8px;top:160.5px" width="16" height="16" viewBox="0 0 16 16"><circle cx="8" cy="8" r="6.95" fill="none" stroke="#ea2a31" stroke-width="1.3"/></svg>
<span class="t" style="top:162.50px;line-height:12px;font-size:9.5px;word-spacing:-0.079px;left:540.60px;"><span style="letter-spacing:-0.823px">CATUPDATE_TEST</span> <span style="letter-spacing:0.569px">-</span> <span style="letter-spacing:-0.089px">Projekt</span> <span style="letter-spacing:-0.542px">4x4</span> <span style="letter-spacing:-0.591px">NEW</span> <span style="letter-spacing:-0.591px">NEW</span></span>
<div style="left:190px;top:176.9px;width:538px;height:17.0px;background:#e5ebf1;"></div>
<div style="left:519.5px;top:176.9px;width:208.5px;height:17.0px;background:#ebeff3;"></div>
<div style="left:190px;top:193.4px;width:329.5px;height:1px;background:#edf0f4;"></div>
<div style="left:519.5px;top:193.4px;width:208.5px;height:1px;background:#e3e5e7;"></div>
<div style="left:354px;top:176.9px;width:1px;height:17.0px;background:#f2f5f8;"></div>
<div style="left:519px;top:176.9px;width:1px;height:17.0px;background:#f2f5f8;"></div>
<span class="t" style="top:179.50px;line-height:12px;font-size:9.5px;word-spacing:-0.073px;left:208.10px;"><span style="letter-spacing:-0.123px">Geometrical</span> <span style="letter-spacing:-0.009px">similarity</span></span>
<svg style="left:354.5px;top:177.5px" width="16" height="16" viewBox="0 0 16 16"><circle cx="8" cy="8" r="7.1" fill="#dff4e7" stroke="#45bd78" stroke-width="1"/><circle cx="8" cy="8" r="6" fill="#08a94b"/></svg>
<span class="t" style="top:179.50px;line-height:12px;font-size:9.5px;left:374.30px;letter-spacing:-0.378px;">100%</span>
<svg style="left:519.8px;top:177.5px" width="16" height="16" viewBox="0 0 16 16"><circle cx="8" cy="8" r="7.1" fill="#dff4e7" stroke="#45bd78" stroke-width="1"/><circle cx="8" cy="8" r="6" fill="#08a94b"/></svg>
<span class="t" style="top:179.50px;line-height:12px;font-size:9.5px;left:540.60px;letter-spacing:-0.378px;">100%</span>
<div style="left:190px;top:193.9px;width:538px;height:17.0px;background:#94b0c8;"></div>
<div style="left:354px;top:193.9px;width:1px;height:17.0px;background:#a9c0d4;"></div>
<div style="left:519px;top:193.9px;width:1px;height:17.0px;background:#a9c0d4;"></div>
<svg style="left:193px;top:197.3px" width="10.2" height="10.2" viewBox="0 0 10.2 10.2"><circle cx="5.1" cy="5.1" r="4.7" fill="#4c82b8" stroke="#6f94b6" stroke-width="0.8"/><path d="M1.2 6.4 A4.2 4.2 0 0 0 9 6.4 Z" fill="#3d72a8" opacity="0.7"/><rect x="2.7" y="4.4" width="4.8" height="1.5" fill="#fff"/></svg>
<span class="t" style="top:196.40px;line-height:12px;font-size:9.5px;color:#fff;word-spacing:-0.094px;left:209.30px;"><span style="letter-spacing:-1.300px">ERP</span> <span style="letter-spacing:-0.106px">data</span></span>
<div style="left:190px;top:210.9px;width:538px;height:17.0px;background:#e5ebf1;"></div>
<div style="left:190px;top:210.9px;width:164px;height:17.0px;background:#fcd5b4;"></div>
<div style="left:519.5px;top:210.9px;width:208.5px;height:17.0px;background:#f0f0f0;"></div>
<div style="left:190px;top:227.4px;width:329.5px;height:1px;background:#edf0f4;"></div>
<div style="left:519.5px;top:227.4px;width:208.5px;height:1px;background:#e3e5e7;"></div>
<div style="left:354px;top:210.9px;width:1px;height:17.0px;background:#f2f5f8;"></div>
<div style="left:519px;top:210.9px;width:1px;height:17.0px;background:#f2f5f8;"></div>
<span class="t" style="top:213.50px;line-height:12px;font-size:9.5px;word-spacing:-0.083px;left:208.10px;"><span style="letter-spacing:-0.821px">ERP_PDM_NUMBER</span> <span style="letter-spacing:-1.043px">(ERP</span> <span style="letter-spacing:-0.050px">number)</span></span>
<svg style="left:354.5px;top:211.5px" width="16" height="16" viewBox="0 0 16 16"><circle cx="8" cy="8" r="7.1" fill="#dff4e7" stroke="#45bd78" stroke-width="1"/><circle cx="8" cy="8" r="6" fill="#08a94b"/></svg>
<span class="t" style="top:213.50px;line-height:12px;font-size:9.5px;left:374.30px;letter-spacing:-0.630px;">1554288633.1</span>
<svg style="left:519.8px;top:211.5px" width="16" height="16" viewBox="0 0 16 16"><circle cx="8" cy="8" r="7.1" fill="#dff4e7" stroke="#45bd78" stroke-width="1"/><circle cx="8" cy="8" r="6" fill="#08a94b"/></svg>
<span class="t" style="top:213.50px;line-height:12px;font-size:9.5px;left:540.60px;letter-spacing:-0.630px;">1554288633.1</span>
<div style="left:190px;top:227.9px;width:538px;height:17.0px;background:#e5ebf1;"></div>
<div style="left:190px;top:227.9px;width:164px;height:17.0px;background:#c5f68e;"></div>
<div style="left:519.5px;top:227.9px;width:208.5px;height:17.0px;background:#f0f0f0;"></div>
<div style="left:190px;top:244.4px;width:329.5px;height:1px;background:#edf0f4;"></div>
<div style="left:519.5px;top:244.4px;width:208.5px;height:1px;background:#e3e5e7;"></div>
<div style="left:354px;top:227.9px;width:1px;height:17.0px;background:#f2f5f8;"></div>
<div style="left:519px;top:227.9px;width:1px;height:17.0px;background:#f2f5f8;"></div>
<span class="t" style="top:230.50px;line-height:12px;font-size:9.5px;word-spacing:-0.062px;left:208.10px;"><span style="letter-spacing:-0.770px">ACTIVE_STATE</span> <span style="letter-spacing:-0.127px">(Active</span> <span style="letter-spacing:-0.171px">status)</span></span>
<svg style="left:354.5px;top:228.5px" width="16" height="16" viewBox="0 0 16 16"><circle cx="8" cy="8" r="7.1" fill="#dff4e7" stroke="#45bd78" stroke-width="1"/><circle cx="8" cy="8" r="6" fill="#08a94b"/></svg>
<span class="t" style="top:230.50px;line-height:12px;font-size:9.5px;left:374.30px;letter-spacing:-0.568px;">Released</span>
<svg style="left:519.8px;top:228.5px" width="16" height="16" viewBox="0 0 16 16"><circle cx="8" cy="8" r="6.95" fill="none" stroke="#ea2a31" stroke-width="1.3"/></svg>
<span class="t" style="top:230.50px;line-height:12px;font-size:9.5px;left:540.60px;letter-spacing:-0.173px;">Locked</span>
<div style="left:190px;top:244.9px;width:538px;height:17.0px;background:#e5ebf1;"></div>
<div style="left:190px;top:244.9px;width:164px;height:17.0px;background:#fcc9de;"></div>
<div style="left:519.5px;top:244.9px;width:208.5px;height:17.0px;background:#f0f0f0;"></div>
<div style="left:190px;top:261.4px;width:329.5px;height:1px;background:#edf0f4;"></div>
<div style="left:519.5px;top:261.4px;width:208.5px;height:1px;background:#e3e5e7;"></div>
<div style="left:354px;top:244.9px;width:1px;height:17.0px;background:#f2f5f8;"></div>
<div style="left:519px;top:244.9px;width:1px;height:17.0px;background:#f2f5f8;"></div>
<span class="t" style="top:247.50px;line-height:12px;font-size:9.5px;word-spacing:-0.084px;left:208.10px;"><span style="letter-spacing:-0.978px">REQUESTED_STATE</span> <span style="letter-spacing:-0.271px">(Requested</span> <span style="letter-spacing:-0.660px">s...</span></span>
<svg style="left:354.5px;top:245.5px" width="16" height="16" viewBox="0 0 16 16"><circle cx="8" cy="8" r="7.1" fill="#dff4e7" stroke="#45bd78" stroke-width="1"/><circle cx="8" cy="8" r="6" fill="#08a94b"/></svg>
<span class="t" style="top:247.50px;line-height:12px;font-size:9.5px;left:374.30px;letter-spacing:-0.374px;">Expired</span>
<svg style="left:519.8px;top:245.5px" width="16" height="16" viewBox="0 0 16 16"><circle cx="8" cy="8" r="6.95" fill="none" stroke="#ea2a31" stroke-width="1.3"/></svg>
<span class="t" style="top:247.50px;line-height:12px;font-size:9.5px;left:540.60px;letter-spacing:-0.103px;">Updated</span>
<div style="left:190px;top:261.9px;width:538px;height:17.0px;background:#94b0c8;"></div>
<div style="left:354px;top:261.9px;width:1px;height:17.0px;background:#a9c0d4;"></div>
<div style="left:519px;top:261.9px;width:1px;height:17.0px;background:#a9c0d4;"></div>
<svg style="left:193px;top:265.29999999999995px" width="10.2" height="10.2" viewBox="0 0 10.2 10.2"><circle cx="5.1" cy="5.1" r="4.7" fill="#4c82b8" stroke="#6f94b6" stroke-width="0.8"/><path d="M1.2 6.4 A4.2 4.2 0 0 0 9 6.4 Z" fill="#3d72a8" opacity="0.7"/><rect x="2.7" y="4.4" width="4.8" height="1.5" fill="#fff"/></svg>
<span class="t" style="top:264.40px;line-height:12px;font-size:9.5px;color:#fff;left:209.30px;letter-spacing:-0.184px;">Parameter</span>
<div style="left:190px;top:278.9px;width:538px;height:17.0px;background:#e5ebf1;"></div>
<div style="left:519.5px;top:278.9px;width:208.5px;height:17.0px;background:#f0f0f0;"></div>
<div style="left:190px;top:295.4px;width:329.5px;height:1px;background:#edf0f4;"></div>
<div style="left:519.5px;top:295.4px;width:208.5px;height:1px;background:#e3e5e7;"></div>
<div style="left:354px;top:278.9px;width:1px;height:17.0px;background:#f2f5f8;"></div>
<div style="left:519px;top:278.9px;width:1px;height:17.0px;background:#f2f5f8;"></div>
<span class="t" style="top:281.50px;line-height:12px;font-size:9.5px;word-spacing:-0.082px;left:208.10px;"><span style="letter-spacing:-0.404px">IDNR</span> <span style="letter-spacing:-0.046px">(Identnummer)</span></span>
<svg style="left:354.5px;top:279.5px" width="16" height="16" viewBox="0 0 16 16"><circle cx="8" cy="8" r="7.1" fill="#dff4e7" stroke="#45bd78" stroke-width="1"/><circle cx="8" cy="8" r="6" fill="#08a94b"/></svg>
<span class="t" style="top:281.50px;line-height:12px;font-size:9.5px;left:374.30px;letter-spacing:0.091px;">4x4</span>
<svg style="left:519.8px;top:279.5px" width="16" height="16" viewBox="0 0 16 16"><circle cx="8" cy="8" r="6.95" fill="none" stroke="#ea2a31" stroke-width="1.3"/></svg>
<span class="t" style="top:281.50px;line-height:12px;font-size:9.5px;word-spacing:-0.055px;left:540.60px;"><span style="letter-spacing:-0.500px">4x4</span> <span style="letter-spacing:-0.529px">NEW</span></span>
<div style="left:190px;top:295.9px;width:538px;height:17.0px;background:#e5ebf1;"></div>
<div style="left:519.5px;top:295.9px;width:208.5px;height:17.0px;background:#f0f0f0;"></div>
<div style="left:190px;top:312.4px;width:329.5px;height:1px;background:#edf0f4;"></div>
<div style="left:519.5px;top:312.4px;width:208.5px;height:1px;background:#e3e5e7;"></div>
<div style="left:354px;top:295.9px;width:1px;height:17.0px;background:#f2f5f8;"></div>
<div style="left:519px;top:295.9px;width:1px;height:17.0px;background:#f2f5f8;"></div>
<span class="t" style="top:298.50px;line-height:12px;font-size:9.5px;left:208.10px;letter-spacing:-0.335px;">A</span>
<svg style="left:354.5px;top:296.5px" width="16" height="16" viewBox="0 0 16 16"><circle cx="8" cy="8" r="7.1" fill="#dff4e7" stroke="#45bd78" stroke-width="1"/><circle cx="8" cy="8" r="6" fill="#08a94b"/></svg>
<span class="t" style="top:298.50px;line-height:12px;font-size:9.5px;word-spacing:0.051px;left:374.30px;"><span style="letter-spacing:-0.376px">1.000</span> <span style="letter-spacing:0.540px">mm</span></span>
<svg style="left:519.8px;top:296.5px" width="16" height="16" viewBox="0 0 16 16"><circle cx="8" cy="8" r="7.1" fill="#dff4e7" stroke="#45bd78" stroke-width="1"/><circle cx="8" cy="8" r="6" fill="#08a94b"/></svg>
<span class="t" style="top:298.50px;line-height:12px;font-size:9.5px;word-spacing:0.051px;left:540.60px;"><span style="letter-spacing:-0.376px">1.000</span> <span style="letter-spacing:0.540px">mm</span></span>
<div style="left:190px;top:312.9px;width:538px;height:17.0px;background:#e5ebf1;"></div>
<div style="left:519.5px;top:312.9px;width:208.5px;height:17.0px;background:#f0f0f0;"></div>
<div style="left:190px;top:329.4px;width:329.5px;height:1px;background:#edf0f4;"></div>
<div style="left:519.5px;top:329.4px;width:208.5px;height:1px;background:#e3e5e7;"></div>
<div style="left:354px;top:312.9px;width:1px;height:17.0px;background:#f2f5f8;"></div>
<div style="left:519px;top:312.9px;width:1px;height:17.0px;background:#f2f5f8;"></div>
<span class="t" style="top:315.50px;line-height:12px;font-size:9.5px;left:208.10px;letter-spacing:-1.004px;">B</span>
<svg style="left:354.5px;top:313.5px" width="16" height="16" viewBox="0 0 16 16"><circle cx="8" cy="8" r="7.1" fill="#dff4e7" stroke="#45bd78" stroke-width="1"/><circle cx="8" cy="8" r="6" fill="#08a94b"/></svg>
<span class="t" style="top:315.50px;line-height:12px;font-size:9.5px;word-spacing:0.051px;left:374.30px;"><span style="letter-spacing:-0.376px">4.000</span> <span style="letter-spacing:0.540px">mm</span></span>
<svg style="left:519.8px;top:313.5px" width="16" height="16" viewBox="0 0 16 16"><circle cx="8" cy="8" r="7.1" fill="#dff4e7" stroke="#45bd78" stroke-width="1"/><circle cx="8" cy="8" r="6" fill="#08a94b"/></svg>
<span class="t" style="top:315.50px;line-height:12px;font-size:9.5px;word-spacing:0.051px;left:540.60px;"><span style="letter-spacing:-0.376px">4.000</span> <span style="letter-spacing:0.540px">mm</span></span>
<div style="left:190px;top:329.9px;width:538px;height:17.0px;background:#e5ebf1;"></div>
<div style="left:519.5px;top:329.9px;width:208.5px;height:17.0px;background:#f0f0f0;"></div>
<div style="left:190px;top:346.4px;width:329.5px;height:1px;background:#edf0f4;"></div>
<div style="left:519.5px;top:346.4px;width:208.5px;height:1px;background:#e3e5e7;"></div>
<div style="left:354px;top:329.9px;width:1px;height:17.0px;background:#f2f5f8;"></div>
<div style="left:519px;top:329.9px;width:1px;height:17.0px;background:#f2f5f8;"></div>
<span class="t" style="top:332.50px;line-height:12px;font-size:9.5px;left:208.10px;letter-spacing:-1.108px;">C</span>
<svg style="left:354.5px;top:330.5px" width="16" height="16" viewBox="0 0 16 16"><circle cx="8" cy="8" r="7.1" fill="#dff4e7" stroke="#45bd78" stroke-width="1"/><circle cx="8" cy="8" r="6" fill="#08a94b"/></svg>
<span class="t" style="top:332.50px;line-height:12px;font-size:9.5px;word-spacing:0.051px;left:374.30px;"><span style="letter-spacing:-0.376px">4.000</span> <span style="letter-spacing:0.540px">mm</span></span>
<svg style="left:519.8px;top:330.5px" width="16" height="16" viewBox="0 0 16 16"><circle cx="8" cy="8" r="7.1" fill="#dff4e7" stroke="#45bd78" stroke-width="1"/><circle cx="8" cy="8" r="6" fill="#08a94b"/></svg>
<span class="t" style="top:332.50px;line-height:12px;font-size:9.5px;word-spacing:0.051px;left:540.60px;"><span style="letter-spacing:-0.376px">4.000</span> <span style="letter-spacing:0.540px">mm</span></span>
<div style="left:189.3px;top:360px;width:548.2px;height:150.5px;background:#fff;border:1px solid #b0b0b0;"></div>
<div style="left:217.5px;top:361px;width:1px;height:54.5px;background:#e2e2e2;"></div>
<div style="left:308.9px;top:361px;width:1px;height:54.5px;background:#e2e2e2;"></div>
<div style="left:377.7px;top:361px;width:1px;height:54.5px;background:#e2e2e2;"></div>
<div style="left:466.9px;top:361px;width:1px;height:54.5px;background:#e2e2e2;"></div>
<div style="left:525.5px;top:361px;width:1px;height:54.5px;background:#e2e2e2;"></div>
<div style="left:583.5px;top:361px;width:1px;height:54.5px;background:#e2e2e2;"></div>
<div style="left:641.5px;top:361px;width:1px;height:54.5px;background:#e2e2e2;"></div>
<div style="left:699.5px;top:361px;width:1px;height:54.5px;background:#e2e2e2;"></div>
<span class="t" style="top:363.20px;line-height:12px;font-size:9.5px;font-weight:bold;-webkit-text-stroke:0;left:221.80px;letter-spacing:-0.565px;">ERP_PDM_NUMBER</span>
<span class="t" style="top:381.00px;line-height:12px;font-size:9.5px;word-spacing:-0.068px;left:221.20px;"><span style="letter-spacing:-1.247px">ERP</span> <span style="letter-spacing:0.029px">number</span></span>
<div style="left:218.5px;top:395.2px;width:90.39999999999998px;height:18.2px;background:#fff;border:1px solid #9c9c9c;"></div>
<span class="t" style="top:363.20px;line-height:12px;font-size:9.5px;font-weight:bold;-webkit-text-stroke:0;left:313.20px;letter-spacing:-0.630px;">ACTIVE_STATE</span>
<span class="t" style="top:381.00px;line-height:12px;font-size:9.5px;word-spacing:-0.089px;left:312.60px;"><span style="letter-spacing:-0.137px">Active</span> <span style="letter-spacing:-0.190px">status</span></span>
<div style="left:309.9px;top:395.2px;width:67.80000000000001px;height:18.2px;background:#fff;border:1px solid #9c9c9c;"></div>
<span class="t" style="top:363.20px;line-height:12px;font-size:9.5px;font-weight:bold;-webkit-text-stroke:0;left:382.00px;letter-spacing:-0.736px;">REQUESTED_STATE</span>
<span class="t" style="top:381.00px;line-height:12px;font-size:9.5px;word-spacing:-0.136px;left:381.40px;"><span style="letter-spacing:-0.359px">Requested</span> <span style="letter-spacing:-0.264px">status</span></span>
<div style="left:378.7px;top:395.2px;width:88.19999999999999px;height:18.2px;background:#fff;border:1px solid #9c9c9c;"></div>
<span class="t" style="top:363.20px;line-height:12px;font-size:9.5px;font-weight:bold;-webkit-text-stroke:0;left:497.7px;transform:translateX(-50%);letter-spacing:0.191px;">IDNR</span>
<span class="t" style="top:381.00px;line-height:12px;font-size:9.5px;left:470.90px;letter-spacing:-0.012px;">Identnum...</span>
<div style="left:467.9px;top:395.2px;width:57.60000000000002px;height:18.2px;background:#fff;border:1px solid #9c9c9c;"></div>
<span class="t" style="top:363.20px;line-height:12px;font-size:9.5px;font-weight:bold;-webkit-text-stroke:0;left:556.0px;transform:translateX(-50%);letter-spacing:-0.434px;">A</span>
<span class="t" style="top:381.00px;line-height:12px;font-size:9.5px;left:529.50px;letter-spacing:0.723px;">[mm]</span>
<div style="left:526.5px;top:395.2px;width:57px;height:18.2px;background:#fff;border:1px solid #9c9c9c;"></div>
<span class="t" style="top:363.20px;line-height:12px;font-size:9.5px;font-weight:bold;-webkit-text-stroke:0;left:614.0px;transform:translateX(-50%);letter-spacing:-1.120px;">B</span>
<span class="t" style="top:381.00px;line-height:12px;font-size:9.5px;left:587.50px;letter-spacing:0.723px;">[mm]</span>
<div style="left:584.5px;top:395.2px;width:57px;height:18.2px;background:#fff;border:1px solid #9c9c9c;"></div>
<span class="t" style="top:363.20px;line-height:12px;font-size:9.5px;font-weight:bold;-webkit-text-stroke:0;left:672.0px;transform:translateX(-50%);letter-spacing:-1.267px;">C</span>
<span class="t" style="top:381.00px;line-height:12px;font-size:9.5px;left:645.50px;letter-spacing:0.723px;">[mm]</span>
<div style="left:642.5px;top:395.2px;width:57px;height:18.2px;background:#fff;border:1px solid #9c9c9c;"></div>
<div style="left:218px;top:415.3px;width:91.4px;height:17.6px;background:#fcd5b4;"></div>
<div style="left:309.4px;top:415.3px;width:68.8px;height:17.6px;background:#c5f68e;"></div>
<div style="left:378.2px;top:415.3px;width:89.2px;height:17.6px;background:#fcc9de;"></div>
<div style="left:190.5px;top:432.9px;width:509.5px;height:18px;background:#7a9bb6;"></div>
<div style="left:308.9px;top:432.9px;width:1px;height:18px;background:#a9bfd2;"></div>
<div style="left:377.7px;top:432.9px;width:1px;height:18px;background:#a9bfd2;"></div>
<div style="left:466.9px;top:432.9px;width:1px;height:18px;background:#a9bfd2;"></div>
<div style="left:525.5px;top:432.9px;width:1px;height:18px;background:#a9bfd2;"></div>
<div style="left:583.5px;top:432.9px;width:1px;height:18px;background:#a9bfd2;"></div>
<div style="left:641.5px;top:432.9px;width:1px;height:18px;background:#a9bfd2;"></div>
<span class="t" style="top:418.00px;line-height:12px;font-size:9.5px;font-weight:bold;-webkit-text-stroke:0;left:212.2px;transform:translateX(-100%);letter-spacing:-0.321px;">1</span>
<span class="t" style="top:436.20px;line-height:12px;font-size:9.5px;color:#fff;font-weight:bold;-webkit-text-stroke:0;left:212.4px;transform:translateX(-100%);letter-spacing:-0.321px;">2</span>
<svg style="left:192.6px;top:438.6px" width="11" height="8" viewBox="0 0 11 8"><path d="M0.4 2.6 H6.2 V0.3 L10.7 4 L6.2 7.7 V5.4 H0.4 Z" fill="#6ba8e2" stroke="#5590cc" stroke-width="0.4"/></svg>
<span class="t" style="top:418.20px;line-height:12px;font-size:9.5px;left:218.00px;letter-spacing:-0.605px;">1554288633.0</span>
<span class="t" style="top:436.20px;line-height:12px;font-size:9.5px;color:#fff;left:218.00px;letter-spacing:-0.622px;">1554288633.1</span>
<span class="t" style="top:418.20px;line-height:12px;font-size:9.5px;color:#a3bf8a;left:309.40px;letter-spacing:-0.253px;">Locked</span>
<span class="t" style="top:436.00px;line-height:12px;font-size:9.5px;color:#9fb3b6;left:309.40px;letter-spacing:-0.253px;">Locked</span>
<span class="t" style="top:418.20px;line-height:12px;font-size:9.5px;color:#ee8418;left:378.40px;letter-spacing:-0.047px;">Updated</span>
<span class="t" style="top:436.00px;line-height:12px;font-size:9.5px;color:#e08a2a;left:378.40px;letter-spacing:-0.047px;">Updated</span>
<span class="t" style="top:418.20px;line-height:12px;font-size:9.5px;left:496.7px;transform:translateX(-50%);letter-spacing:-0.561px;">2x2</span>
<span class="t" style="top:436.00px;line-height:12px;font-size:9.5px;color:#fff;word-spacing:-0.089px;left:496.7px;transform:translateX(-50%);"><span style="letter-spacing:-0.561px">4x4</span> <span style="letter-spacing:-0.620px">NEW</span></span>
<span class="t" style="top:418.20px;line-height:12px;font-size:9.5px;left:555.0px;transform:translateX(-50%);letter-spacing:-0.605px;">1.000</span>
<span class="t" style="top:436.00px;line-height:12px;font-size:9.5px;color:#fff;left:555.0px;transform:translateX(-50%);letter-spacing:-0.605px;">1.000</span>
<span class="t" style="top:418.20px;line-height:12px;font-size:9.5px;left:613.0px;transform:translateX(-50%);letter-spacing:-0.605px;">2.000</span>
<span class="t" style="top:436.00px;line-height:12px;font-size:9.5px;color:#fff;left:613.0px;transform:translateX(-50%);letter-spacing:-0.605px;">4.000</span>
<span class="t" style="top:418.20px;line-height:12px;font-size:9.5px;left:671.0px;transform:translateX(-50%);letter-spacing:-0.605px;">2.000</span>
<span class="t" style="top:436.00px;line-height:12px;font-size:9.5px;color:#fff;left:671.0px;transform:translateX(-50%);letter-spacing:-0.605px;">4.000</span>
<span class="t" style="top:526.50px;line-height:12px;font-size:9.5px;word-spacing:-0.095px;left:188.80px;"><span style="letter-spacing:-0.140px">Filter</span> <span style="letter-spacing:-0.130px">table:</span></span>
<div style="left:252px;top:520.8px;width:224px;height:3.2px;background:#e9e9e9;border:1px solid #d4d4d4;"></div>
<svg style="left:244px;top:515px" width="9" height="15.2" viewBox="0 0 9 15.2"><path d="M0.3 0.2 H8.3 V10.6 L4.3 15 L0.3 10.6 Z" fill="#1473d6"/></svg>
<div style="left:247.9px;top:532.4px;width:1px;height:3.5px;background:#666;"></div>
<span class="t" style="top:536.80px;line-height:12px;font-size:9.5px;left:246.8px;transform:translateX(-50%);letter-spacing:-0.612px;">0</span>
<div style="left:270.2px;top:532.4px;width:1px;height:3.5px;background:#666;"></div>
<div style="left:292.5px;top:532.4px;width:1px;height:3.5px;background:#666;"></div>
<span class="t" style="top:536.80px;line-height:12px;font-size:9.5px;left:293.0px;transform:translateX(-50%);letter-spacing:-0.604px;">20</span>
<div style="left:314.8px;top:532.4px;width:1px;height:3.5px;background:#666;"></div>
<div style="left:337.1px;top:532.4px;width:1px;height:3.5px;background:#666;"></div>
<span class="t" style="top:536.80px;line-height:12px;font-size:9.5px;left:337.6px;transform:translateX(-50%);letter-spacing:-0.604px;">40</span>
<div style="left:359.4px;top:532.4px;width:1px;height:3.5px;background:#666;"></div>
<div style="left:381.7px;top:532.4px;width:1px;height:3.5px;background:#666;"></div>
<span class="t" style="top:536.80px;line-height:12px;font-size:9.5px;left:382.20000000000005px;transform:translateX(-50%);letter-spacing:-0.604px;">60</span>
<div style="left:404.0px;top:532.4px;width:1px;height:3.5px;background:#666;"></div>
<div style="left:426.3px;top:532.4px;width:1px;height:3.5px;background:#666;"></div>
<span class="t" style="top:536.80px;line-height:12px;font-size:9.5px;left:426.8px;transform:translateX(-50%);letter-spacing:-0.604px;">80</span>
<div style="left:448.6px;top:532.4px;width:1px;height:3.5px;background:#666;"></div>
<div style="left:470.9px;top:532.4px;width:1px;height:3.5px;background:#666;"></div>
<span class="t" style="top:536.80px;line-height:12px;font-size:9.5px;left:471.4px;transform:translateX(-50%);letter-spacing:-0.602px;">100</span>
<span class="t" style="top:525.50px;line-height:12px;font-size:9.5px;left:486.40px;letter-spacing:-0.835px;">%</span>
<div style="left:717px;top:562px;width:28px;height:17.6px;background:#94b1ca;border:1px solid #7396b5;border-radius:2px;"></div>
<span class="t" style="top:564.80px;line-height:12px;font-size:9.5px;color:#fff;left:731px;transform:translateX(-50%);letter-spacing:-0.398px;">Close</span>
</body></html>
